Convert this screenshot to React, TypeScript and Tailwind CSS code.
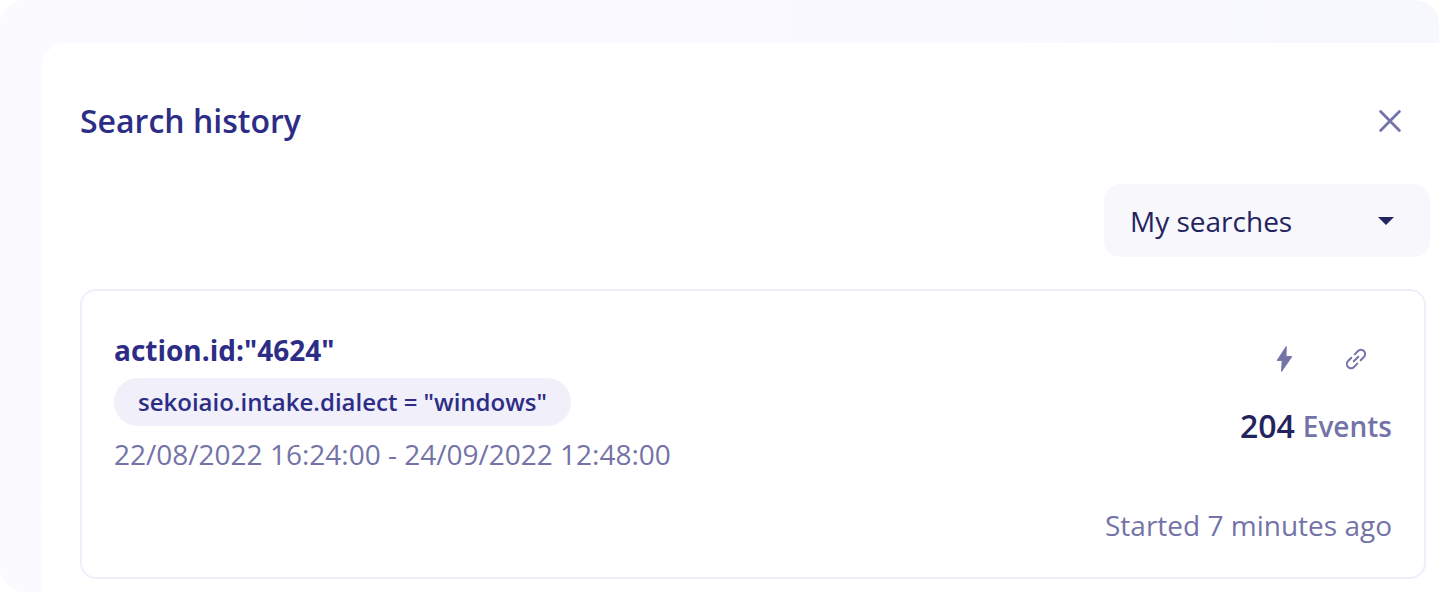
import React from "react";

function CloseIcon() {
  return (
    <svg viewBox="0 0 24 24" className="size-6" fill="none" stroke="currentColor" strokeWidth="2.8" strokeLinecap="round" aria-hidden="true">
      <path d="M2.6 2.6 21.4 21.4M21.4 2.6 2.6 21.4" />
    </svg>
  );
}

function BoltIcon() {
  return (
    <svg viewBox="0 0 28 28" className="size-7" fill="currentColor" stroke="currentColor" strokeWidth="1" strokeLinejoin="round" aria-hidden="true">
      <path d="M16.2 1.6 7.2 15.4h5L11.6 26.4 21.8 11.6h-5.8z" />
    </svg>
  );
}

function LinkIcon() {
  return (
    <svg viewBox="0 0 28 28" className="size-7" fill="none" stroke="currentColor" strokeWidth="2" strokeLinecap="round" aria-hidden="true">
      <g transform="rotate(-45 14 14)">
        <path d="M11.6 9.8H7a4.2 4.2 0 0 0 0 8.4h4.6" />
        <path d="M16.4 9.8H21a4.2 4.2 0 0 1 0 8.4h-4.6" />
        <path d="M10.8 14h6.4" />
      </g>
    </svg>
  );
}

function HistoryCard() {
  return (
    <article className="mt-8 mr-1 flex justify-between rounded-2xl border-2 border-[#efeefa] px-8 pt-[39px] pb-8 text-[28px] leading-10">
      <div className="flex flex-col items-start">
        <h2 className="font-bold text-[#2d2d86]">action.id:"4624"</h2>
        <span className="my-2 rounded-full bg-[#f0effa] px-6 text-2xl leading-12 font-semibold text-[#2d2d86]">
          sekoiaio.intake.dialect = "windows"
        </span>
        <p>22/08/2022 16:24:00 - 24/09/2022 12:48:00</p>
      </div>
      <div className="flex flex-col items-end">
        <div className="mt-[15px] mr-[22px] flex gap-11">
          <button type="button" aria-label="Run search"><BoltIcon /></button>
          <button type="button" aria-label="Copy link"><LinkIcon /></button>
        </div>
        <p className="mt-[33px] flex items-center gap-2 font-semibold">
          <span className="text-[32px] text-[#232360]">204</span>
          <span>Events</span>
        </p>
        <p className="mt-[59px]">Started 7 minutes ago</p>
      </div>
    </article>
  );
}

export default function App() {
  return (
    <div className="bg-white font-['Open_Sans',sans-serif] text-[#7473a8]">
      <div className="flex min-h-screen rounded-3xl bg-linear-to-r from-[#fbfaff] to-[#f7f8fe] pt-[43px] pl-[42px]">
        <main className="flex-1 rounded-tl-3xl bg-white pt-14 pr-[9px] pb-3 pl-[38px]">
          <header className="flex items-center justify-between pr-7">
            <h1 className="text-[32px] leading-11 font-semibold text-[#2d2d86]">Search history</h1>
            <button type="button" aria-label="Close"><CloseIcon /></button>
          </header>
          <div className="mt-[41px] flex justify-end">
            <div className="relative">
              <select
                aria-label="Search filter"
                className="h-[73px] w-[326px] appearance-none rounded-2xl bg-[#f8f7fc] pr-16 pl-6.5 text-[28px] text-[#232360]"
              >
                <option>My searches</option>
              </select>
              <svg viewBox="0 0 16 8" className="pointer-events-none absolute top-[33px] right-9 h-2 w-4 fill-[#232360]" aria-hidden="true">
                <path d="M0 0h16L8 8z" />
              </svg>
            </div>
          </div>
          <HistoryCard />
        </main>
      </div>
    </div>
  );
}
